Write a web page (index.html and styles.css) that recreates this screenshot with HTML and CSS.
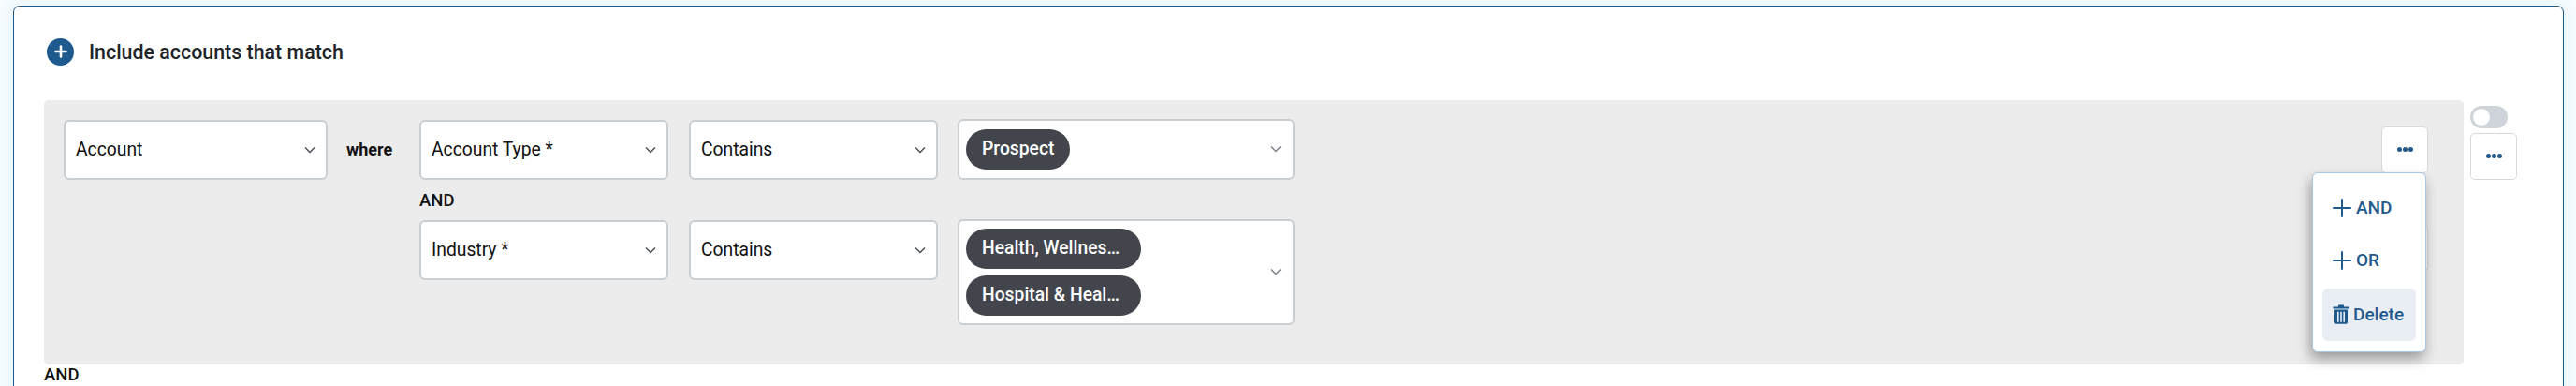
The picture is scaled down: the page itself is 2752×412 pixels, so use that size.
FILE: index.html
```html
<!DOCTYPE html>
<html lang="en">
<head>
    <meta charset="UTF-8">
    <title>Include accounts</title>
    <link rel="stylesheet" href="styles.css">
</head>
<body>
    <div class="card">
        <div class="card-header">
            <span class="add-circle">
                <svg width="14" height="14" viewBox="0 0 14 14"><path d="M7 1.5v11M1.5 7h11" stroke="#fff" stroke-width="2.6" stroke-linecap="round"/></svg>
            </span>
            <span class="card-title">Include accounts that match</span>
        </div>

        <div class="rule-block">
            <div class="panel">
                <div class="select source-select">
                    <span>Account</span>
                    <svg class="chevron" width="14" height="14" viewBox="0 0 14 14"><path d="M2 4.5l5 5 5-5" fill="none" stroke="#495057" stroke-width="1.5"/></svg>
                </div>
                <span class="where">where</span>

                <div class="conditions">
                    <div class="condition">
                        <div class="select field-select">
                            <span>Account Type *</span>
                            <svg class="chevron" width="14" height="14" viewBox="0 0 14 14"><path d="M2 4.5l5 5 5-5" fill="none" stroke="#495057" stroke-width="1.5"/></svg>
                        </div>
                        <div class="select field-select">
                            <span>Contains</span>
                            <svg class="chevron" width="14" height="14" viewBox="0 0 14 14"><path d="M2 4.5l5 5 5-5" fill="none" stroke="#495057" stroke-width="1.5"/></svg>
                        </div>
                        <div class="value-select">
                            <div class="chips">
                                <span class="chip">Prospect</span>
                            </div>
                            <svg class="chevron-light" width="14" height="14" viewBox="0 0 14 14"><path d="M2 4.5l5 5 5-5" fill="none" stroke="#7b8288" stroke-width="1.5"/></svg>
                        </div>
                    </div>
                    <div class="and-label">AND</div>
                    <div class="condition">
                        <div class="select field-select">
                            <span>Industry *</span>
                            <svg class="chevron" width="14" height="14" viewBox="0 0 14 14"><path d="M2 4.5l5 5 5-5" fill="none" stroke="#495057" stroke-width="1.5"/></svg>
                        </div>
                        <div class="select field-select">
                            <span>Contains</span>
                            <svg class="chevron" width="14" height="14" viewBox="0 0 14 14"><path d="M2 4.5l5 5 5-5" fill="none" stroke="#495057" stroke-width="1.5"/></svg>
                        </div>
                        <div class="value-select">
                            <div class="chips">
                                <span class="chip chip-wide">Health, Wellnes…</span>
                                <span class="chip chip-wide">Hospital &amp; Heal…</span>
                            </div>
                            <svg class="chevron-light" width="14" height="14" viewBox="0 0 14 14"><path d="M2 4.5l5 5 5-5" fill="none" stroke="#7b8288" stroke-width="1.5"/></svg>
                        </div>
                    </div>
                </div>

                <div class="actions">
                    <button class="dots-button"><i></i><i></i><i></i></button>
                    <button class="dots-button"><i></i><i></i><i></i></button>
                    <div class="menu">
                        <div class="menu-item">
                            <svg width="20" height="20" viewBox="0 0 20 20"><path d="M10 1v18M1 10h18" stroke="#1f5a8e" stroke-width="2" stroke-linecap="round"/></svg>
                            <span>AND</span>
                        </div>
                        <div class="menu-item">
                            <svg width="20" height="20" viewBox="0 0 20 20"><path d="M10 1v18M1 10h18" stroke="#1f5a8e" stroke-width="2" stroke-linecap="round"/></svg>
                            <span>OR</span>
                        </div>
                        <div class="menu-item menu-item-active">
                            <svg width="18" height="21" viewBox="0 0 18 21"><path d="M0.5 2.6h17v1.8H0.5zM6 0.6h6v2H6z" fill="#1f5a8e"/><path fill-rule="evenodd" d="M2 5.6h14v13.4a1.8 1.8 0 0 1-1.8 1.8H3.8A1.8 1.8 0 0 1 2 19zM5 7.8v11h1.6v-11zM8.2 7.8v11h1.6v-11zM11.4 7.8v11H13v-11z" fill="#1f5a8e"/></svg>
                            <span>Delete</span>
                        </div>
                    </div>
                </div>
            </div>

            <div class="side-controls">
                <div class="toggle"><span class="toggle-knob"></span></div>
                <button class="dots-button"><i></i><i></i><i></i></button>
            </div>
        </div>

        <div class="block-and">AND</div>
    </div>
</body>
</html>
```

FILE: styles.css
```css
html, body {
    height: 412px;
    overflow: hidden;
}
body {
    margin: 0;
    padding: 6px 13px 0 14px;
    box-sizing: border-box;
    background-color: #f8fcfe;
    font-family: Roboto, "Liberation Sans", sans-serif;
    color: #111;
}
.card {
    height: 440px;
    box-sizing: border-box;
    padding: 33.5px 0 0 32px;
    background-color: #fff;
    border: 1.5px solid #1f5a8e;
    border-radius: 7px;
    box-shadow: 0 0 16px 4px #e6f4fd;
}
.card-header {
    display: flex;
    align-items: center;
    gap: 16px;
    height: 29px;
    margin-left: 3px;
    margin-bottom: 37px;
}
.add-circle {
    display: flex;
    align-items: center;
    justify-content: center;
    width: 29px;
    height: 29px;
    border-radius: 50%;
    background-color: #1f5a8e;
}
.card-title {
    padding-top: 1px;
    font-size: 21.4px;
    font-weight: 500;
    color: #212529;
}
.rule-block {
    display: flex;
    align-items: flex-start;
    gap: 7px;
}
.panel {
    display: flex;
    align-items: flex-start;
    width: 2585px;
    height: 282px;
    box-sizing: border-box;
    padding: 21px 38px 0 21px;
    background-color: #ececec;
    border-radius: 5px;
}
.select, .value-select {
    display: flex;
    align-items: center;
    justify-content: space-between;
    box-sizing: border-box;
    background-color: #fff;
    border: 2px solid #c9ced3;
    border-radius: 6px;
    font-size: 19.3px;
}
.select {
    height: 64px;
    padding: 0 10px 0 11px;
}
.source-select {
    width: 282px;
}
.where {
    width: 98px;
    padding-left: 20px;
    box-sizing: border-box;
    line-height: 64px;
    font-size: 18px;
    font-weight: 700;
}
.conditions {
    display: flex;
    flex-direction: column;
}
.condition {
    display: flex;
    align-items: flex-start;
    gap: 22px;
}
.field-select {
    width: 266px;
}
.value-select {
    width: 360px;
    min-height: 65px;
    margin-top: -1px;
    margin-left: -1px;
    padding: 8px 11px 8px 7px;
}
.chips {
    display: flex;
    flex-direction: column;
    align-items: flex-start;
    gap: 7px;
}
.chip {
    box-sizing: border-box;
    height: 43px;
    padding: 0 17px;
    border-radius: 22px;
    background-color: #42464c;
    color: #fff;
    font-size: 19.3px;
    font-weight: 500;
    line-height: 42px;
}
.chip-wide {
    width: 187px;
}
.and-label {
    height: 43px;
    font-size: 18.5px;
    font-weight: 500;
    line-height: 44px;
}
.actions {
    position: relative;
    display: flex;
    flex-direction: column;
    gap: 55px;
    margin-left: auto;
    padding-top: 7px;
}
.dots-button {
    display: flex;
    align-items: center;
    justify-content: center;
    gap: 1px;
    width: 50px;
    height: 50px;
    padding: 0 0 1px;
    background-color: #fff;
    border: 1px solid #d5d8dc;
    border-radius: 5px;
}
.dots-button i {
    width: 5px;
    height: 5px;
    border-radius: 50%;
    background-color: #1f5a8e;
}
.menu {
    position: absolute;
    top: 56px;
    right: 2px;
    display: flex;
    flex-direction: column;
    width: 122px;
    height: 192px;
    box-sizing: border-box;
    padding: 9px 10px;
    background-color: #fff;
    border: 1px solid #a9c6e4;
    border-radius: 6px;
    box-shadow: -2px 7px 14px rgba(0, 0, 0, 0.35);
}
.menu-item {
    display: flex;
    align-items: center;
    gap: 5px;
    height: 56px;
    padding-left: 11px;
    border-radius: 6px;
    color: #1f5a8e;
    font-size: 19px;
    font-weight: 500;
}
.menu-item-active {
    gap: 4px;
    margin-top: 2px;
    background-color: #e9eef5;
}
.side-controls {
    display: flex;
    flex-direction: column;
    gap: 5px;
    padding-top: 6px;
}
.toggle {
    display: flex;
    align-items: center;
    width: 40px;
    height: 24px;
    padding-left: 3px;
    box-sizing: border-box;
    background-color: #ced4da;
    border-radius: 12px;
}
.toggle-knob {
    width: 18px;
    height: 18px;
    border-radius: 50%;
    background-color: #fff;
}
.block-and {
    height: 21px;
    margin-top: 1px;
    font-size: 18.5px;
    font-weight: 500;
    line-height: 21px;
}
```
